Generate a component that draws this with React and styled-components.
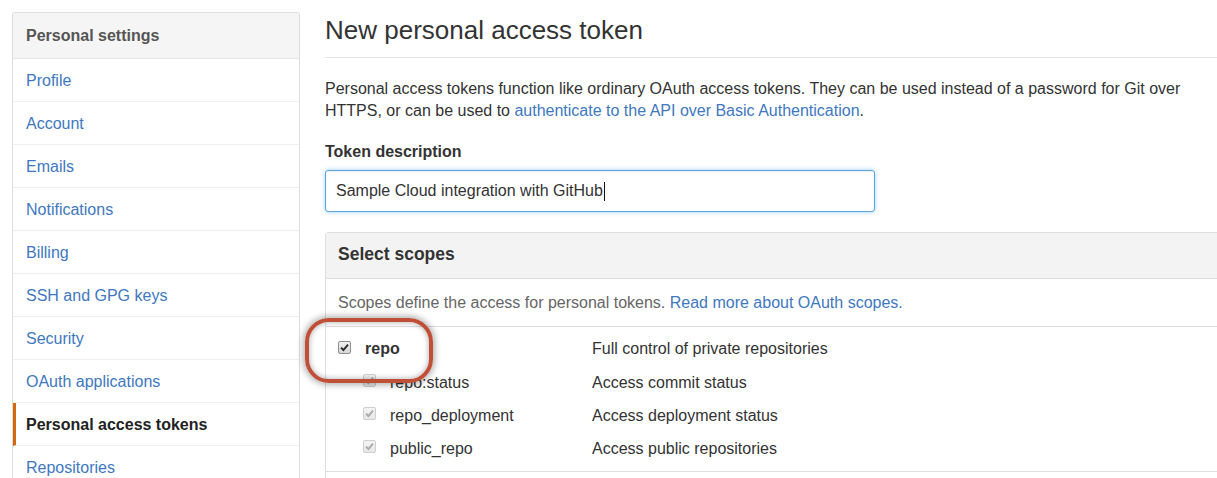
import React from "react";
import styled, { createGlobalStyle } from "styled-components";

const GlobalStyle = createGlobalStyle`
  html, body {
    margin: 0;
    overflow: hidden;
    background: #fff;
  }
  body {
    font-family: "Liberation Sans", Arial, sans-serif;
    color: #333;
  }
`;

const menuItems = [
  "Profile",
  "Account",
  "Emails",
  "Notifications",
  "Billing",
  "SSH and GPG keys",
  "Security",
  "OAuth applications",
  "Personal access tokens",
  "Repositories",
  "Organizations",
];

const scopeGroups = [
  {
    name: "repo",
    desc: "Full control of private repositories",
    children: [
      { name: "repo:status", desc: "Access commit status" },
      { name: "repo_deployment", desc: "Access deployment status" },
      { name: "public_repo", desc: "Access public repositories" },
    ],
  },
  {
    name: "admin:org",
    desc: "Full control of orgs and teams",
    children: [
      { name: "write:org", desc: "Read and write org and team membership" },
    ],
  },
];

const App = () => {
  return (
    <>
      <GlobalStyle />
      <Page>
        <Sidebar>
          <SidebarHeader>Personal settings</SidebarHeader>
          {menuItems.map((item) => (
            <MenuItem key={item} $active={item === "Personal access tokens"}>
              {item}
            </MenuItem>
          ))}
        </Sidebar>

        <Main>
          <Heading>New personal access token</Heading>
          <Intro>
            Personal access tokens function like ordinary OAuth access tokens.
            They can be used instead of a password for Git over HTTPS, or can
            be used to <Link>authenticate to the API over Basic Authentication</Link>.
          </Intro>

          <FieldLabel>Token description</FieldLabel>
          <TextField>
            Sample Cloud integration with GitHub
            <Caret />
          </TextField>

          <ScopesBox>
            <ScopesHeader>Select scopes</ScopesHeader>
            <ScopesNote>
              Scopes define the access for personal tokens.{" "}
              <Link>Read more about OAuth scopes.</Link>
            </ScopesNote>
            {scopeGroups.map((group, i) => (
              <ScopeGroup key={group.name}>
                {i === 0 && <Callout />}
                <ScopeRow $first>
                  <ScopeName>
                    <Checkbox />
                    <strong>{group.name}</strong>
                  </ScopeName>
                  <span>{group.desc}</span>
                </ScopeRow>
                {group.children.map((child) => (
                  <ScopeRow key={child.name}>
                    <ScopeName $child>
                      <Checkbox $disabled />
                      {child.name}
                    </ScopeName>
                    <span>{child.desc}</span>
                  </ScopeRow>
                ))}
              </ScopeGroup>
            ))}
          </ScopesBox>
        </Main>
      </Page>
    </>
  );
};

const Checkbox = ({ $disabled }) => (
  <CheckBoxFrame $disabled={$disabled}>
    <svg width="9" height="9" viewBox="0 0 9 9">
      <path
        d="M1 4.6 L3.4 7 L8 1.6"
        fill="none"
        stroke={$disabled ? "#a9a9a9" : "#2b2b2b"}
        strokeWidth="1.9"
      />
    </svg>
  </CheckBoxFrame>
);

const Page = styled.div`
  display: flex;
  gap: 25px;
  padding: 12px 0 0 12px;
  width: 1300px;
`;

const Sidebar = styled.nav`
  width: 288px;
  flex-shrink: 0;
  align-self: flex-start;
  box-sizing: border-box;
  border: 1px solid #ddd;
  border-radius: 3px;
  overflow: hidden;
`;

const SidebarHeader = styled.div`
  height: 44px;
  display: flex;
  align-items: center;
  padding: 1px 13px 0;
  background: #f5f5f5;
  border-bottom: 1px solid #e5e5e5;
  color: #555;
  font-size: 16px;
  font-weight: bold;
`;

const MenuItem = styled.a`
  display: flex;
  align-items: center;
  height: 41px;
  padding-top: 1px;
  border-bottom: 1px solid #eee;
  font-size: 16px;
  color: ${(p) => (p.$active ? "#222" : "#4078c0")};
  font-weight: ${(p) => (p.$active ? "bold" : "normal")};
  border-left: ${(p) => (p.$active ? "3px solid #d26911" : "none")};
  padding-left: ${(p) => (p.$active ? "10px" : "13px")};
  padding-right: 13px;
`;

const Main = styled.main`
  width: 900px;
  flex-shrink: 0;
`;

const Heading = styled.h2`
  margin: 0;
  font-size: 26px;
  font-weight: normal;
  line-height: 36px;
  padding-bottom: 9px;
  border-bottom: 1px solid #e5e5e5;
  color: #333;
`;

const Intro = styled.p`
  margin: 20px 0 19px;
  font-size: 16px;
  line-height: 22px;
  color: #333;
`;

const Link = styled.a`
  color: #4078c0;
`;

const FieldLabel = styled.div`
  font-size: 16px;
  font-weight: bold;
  line-height: 22px;
  margin-bottom: 7px;
`;

const TextField = styled.div`
  width: 550px;
  height: 42px;
  box-sizing: border-box;
  display: flex;
  align-items: center;
  padding: 0 10px;
  border: 1px solid #51a7e8;
  border-radius: 3px;
  box-shadow: inset 0 1px 2px rgba(0, 0, 0, 0.075),
    0 0 5px rgba(81, 167, 232, 0.5);
  font-size: 16px;
  color: #333;
`;

const Caret = styled.span`
  width: 1px;
  height: 19px;
  background: #111;
  margin-left: 1px;
`;

const ScopesBox = styled.section`
  margin-top: 20px;
  border: 1px solid #ddd;
  border-radius: 3px;
`;

const ScopesHeader = styled.h3`
  margin: 0;
  height: 43px;
  display: flex;
  align-items: center;
  padding: 0 12px 2px;
  background: #f3f3f3;
  border-bottom: 1px solid #ddd;
  font-size: 17.5px;
  font-weight: bold;
  color: #333;
`;

const ScopesNote = styled.p`
  margin: 0;
  height: 47px;
  display: flex;
  align-items: center;
  padding: 0 12px;
  border-bottom: 1px solid #ddd;
  font-size: 16px;
  color: #666;
  white-space: pre;
`;

const ScopeGroup = styled.div`
  position: relative;
  padding: 5px 0 6px;
  border-bottom: 1px solid #ddd;
`;

const ScopeRow = styled.div`
  display: grid;
  grid-template-columns: 254px 1fr;
  align-items: center;
  height: ${(p) => (p.$first ? "34px" : "33px")};
  padding-left: 12px;
  font-size: 16px;
  color: #333;
`;

const ScopeName = styled.label`
  display: flex;
  align-items: center;
  gap: 14px;
  padding-left: ${(p) => (p.$child ? "25px" : "0")};
`;

const CheckBoxFrame = styled.span`
  width: 13px;
  height: 13px;
  box-sizing: border-box;
  display: flex;
  align-items: center;
  justify-content: center;
  border: 1px solid ${(p) => (p.$disabled ? "#cfcfcf" : "#8e8e8e")};
  border-radius: 2px;
  background: ${(p) =>
    p.$disabled
      ? "linear-gradient(#f4f4f4, #e8e8e8)"
      : "linear-gradient(#f2f2f2, #d6d6d6)"};
  margin-top: -4px;
`;

const Callout = styled.div`
  position: absolute;
  left: -21px;
  top: -9px;
  width: 128px;
  height: 65px;
  box-sizing: border-box;
  border: 4px solid #bf4f37;
  border-radius: 24px;
  box-shadow: 0 0 6px 2px rgba(0, 0, 0, 0.3),
    inset 0 0 5px 1px rgba(0, 0, 0, 0.25);
  pointer-events: none;
`;

export default App;
